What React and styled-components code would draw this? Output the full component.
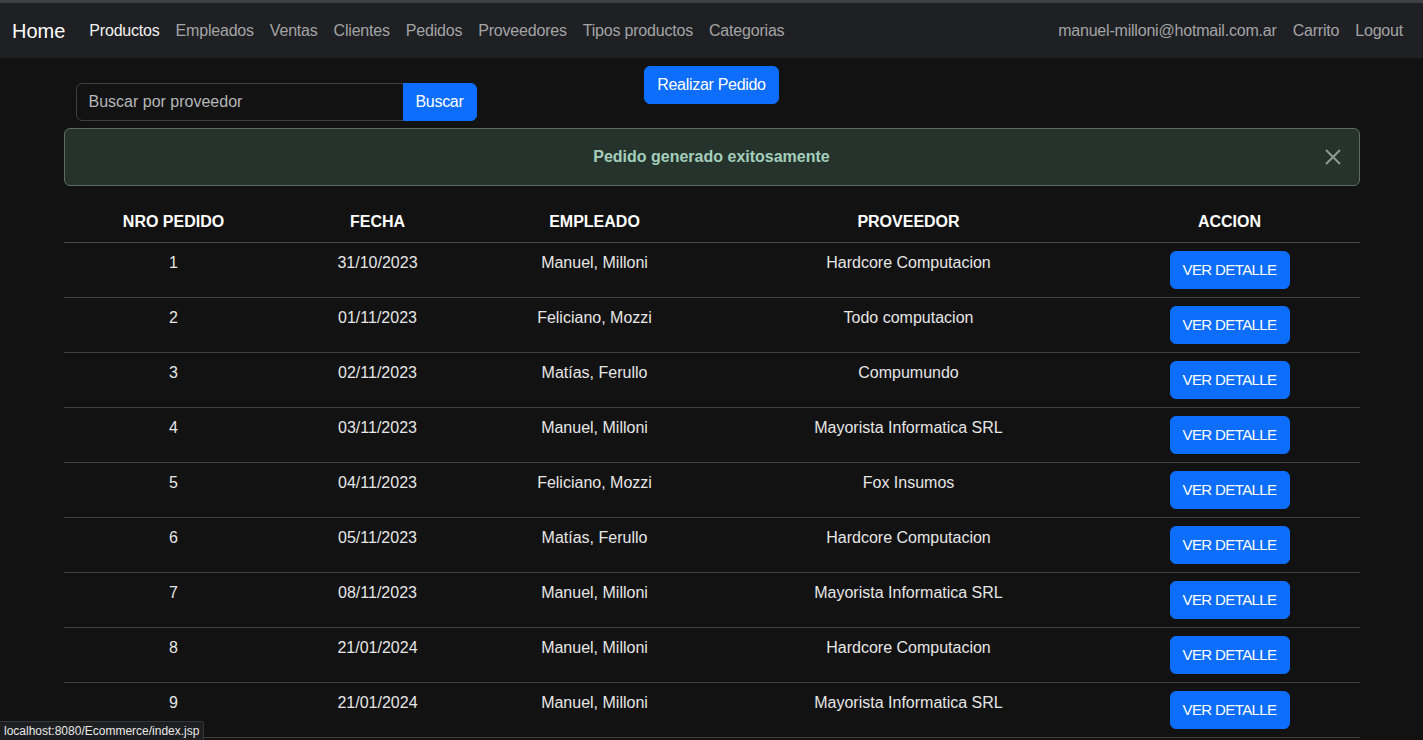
import React from 'react'
import styled, { createGlobalStyle } from 'styled-components'

const GlobalStyle = createGlobalStyle`
    html, body {
        margin: 0;
        padding: 0;
        background: #121212;
        color: #dee2e6;
        font-family: "Liberation Sans", Arial, sans-serif;
        font-size: 16px;
        line-height: 1.5;
    }
    * { box-sizing: border-box; }
`

const Nav = styled.nav`
    height: 58px;
    border-top: 3px solid #3f4042;
    background: #1f2023;
    display: flex;
    align-items: center;
    padding: 0 12px;
`
const Brand = styled.a`
    font-size: 20px;
    color: #fff;
    margin-right: 16px;
    text-decoration: none;
`
const NavList = styled.div`
    display: flex;
    align-items: center;
    margin-left: ${(p) => (p.right ? 'auto' : '0')};
`
const NavLink = styled.a`
    padding: 8px;
    color: ${(p) => (p.active ? '#f2f2f2' : '#a3a4a6')};
    text-decoration: none;
    letter-spacing: -0.2px;
`

const Container = styled.main`
    max-width: 1320px;
    margin: 0 auto;
    padding: 0 12px;
`
const TopRow = styled.div`
    display: grid;
    grid-template-columns: 1fr auto 1fr;
    align-items: start;
`
const SearchForm = styled.form`
    display: flex;
    margin: 25px 0 0 12px;
`
const Input = styled.input`
    width: 328px;
    height: 38px;
    padding: 6px 12px;
    background: #121212;
    border: 1px solid #3d3f42;
    border-radius: 6px 0 0 6px;
    color: #dee2e6;
    font: inherit;
    &::placeholder { color: #b5b7b9; }
`
const BlueButton = styled.button`
    height: 38px;
    padding: 6px 12px;
    background: #0d6efd;
    color: #fff;
    border: 1px solid #0d6efd;
    border-radius: ${(p) => (p.joined ? '0 6px 6px 0' : '6px')};
    font: inherit;
    margin-left: ${(p) => (p.joined ? '-1px' : '0')};
    text-transform: ${(p) => (p.upper ? 'uppercase' : 'none')};
    font-size: ${(p) => (p.upper ? '15px' : '16px')};
    letter-spacing: ${(p) => (p.upper ? '-0.6px' : '-0.3px')};
    cursor: pointer;
`
const CenterButton = styled(BlueButton)`
    margin-top: 8px;
`
const Alert = styled.div`
    position: relative;
    margin: 7px 0 16px;
    height: 58px;
    padding: 16px;
    background: #26332d;
    border: 1px solid #5c6b63;
    border-radius: 6px;
    color: #a3cfbb;
    font-weight: bold;
    text-align: center;
    line-height: 24px;
`
const Close = styled.button`
    position: absolute;
    right: 16px;
    top: 18px;
    width: 20px;
    height: 20px;
    padding: 0;
    background: none;
    border: none;
    cursor: pointer;
`
const Table = styled.table`
    width: 100%;
    border-collapse: collapse;
`
const Th = styled.th`
    width: ${(p) => p.w}px;
    padding: 8px;
    color: #fff;
    font-weight: bold;
    text-align: center;
    border-bottom: 1px solid #4a4b4d;
`
const Td = styled.td`
    padding: 8px;
    text-align: center;
    vertical-align: top;
    color: #e6e6e6;
    border-bottom: 1px solid #3f4042;
`
const StatusBar = styled.div`
    position: fixed;
    left: 0;
    bottom: 0;
    height: 19px;
    padding: 0 4px;
    background: #1d1e20;
    border-top: 1px solid #35363a;
    border-right: 1px solid #35363a;
    border-top-right-radius: 3px;
    color: #e8e8e8;
    font-size: 12px;
    line-height: 18px;
`

const pedidos = [
    [1, '31/10/2023', 'Manuel, Milloni', 'Hardcore Computacion'],
    [2, '01/11/2023', 'Feliciano, Mozzi', 'Todo computacion'],
    [3, '02/11/2023', 'Matías, Ferullo', 'Compumundo'],
    [4, '03/11/2023', 'Manuel, Milloni', 'Mayorista Informatica SRL'],
    [5, '04/11/2023', 'Feliciano, Mozzi', 'Fox Insumos'],
    [6, '05/11/2023', 'Matías, Ferullo', 'Hardcore Computacion'],
    [7, '08/11/2023', 'Manuel, Milloni', 'Mayorista Informatica SRL'],
    [8, '21/01/2024', 'Manuel, Milloni', 'Hardcore Computacion'],
    [9, '21/01/2024', 'Manuel, Milloni', 'Mayorista Informatica SRL'],
]

const links = ['Productos', 'Empleados', 'Ventas', 'Clientes', 'Pedidos', 'Proveedores', 'Tipos productos', 'Categorias']

export default function App() {
    return (
        <>
            <GlobalStyle />
            <Nav>
                <Brand href="#">Home</Brand>
                <NavList>
                    {links.map((l, i) => (
                        <NavLink key={l} href="#" active={i === 0}>{l}</NavLink>
                    ))}
                </NavList>
                <NavList right>
                    <NavLink href="#">manuel-milloni@hotmail.com.ar</NavLink>
                    <NavLink href="#">Carrito</NavLink>
                    <NavLink href="#">Logout</NavLink>
                </NavList>
            </Nav>
            <Container>
                <TopRow>
                    <SearchForm onSubmit={(e) => e.preventDefault()}>
                        <Input placeholder="Buscar por proveedor" />
                        <BlueButton joined type="submit">Buscar</BlueButton>
                    </SearchForm>
                    <CenterButton>Realizar Pedido</CenterButton>
                    <div />
                </TopRow>
                <Alert>
                    Pedido generado exitosamente
                    <Close aria-label="Close">
                        <svg width="20" height="20" viewBox="0 0 20 20">
                            <path d="M3 3 L17 17 M17 3 L3 17" stroke="#8d9993" strokeWidth="2" />
                        </svg>
                    </Close>
                </Alert>
                <Table>
                    <thead>
                        <tr>
                            <Th w={220}>NRO PEDIDO</Th>
                            <Th w={188}>FECHA</Th>
                            <Th w={246}>EMPLEADO</Th>
                            <Th w={382}>PROVEEDOR</Th>
                            <Th w={260}>ACCION</Th>
                        </tr>
                    </thead>
                    <tbody>
                        {pedidos.map((p) => (
                            <tr key={p[0]}>
                                <Td>{p[0]}</Td>
                                <Td>{p[1]}</Td>
                                <Td>{p[2]}</Td>
                                <Td>{p[3]}</Td>
                                <Td><BlueButton upper>Ver detalle</BlueButton></Td>
                            </tr>
                        ))}
                    </tbody>
                </Table>
            </Container>
            <StatusBar>localhost:8080/Ecommerce/index.jsp</StatusBar>
        </>
    )
}
